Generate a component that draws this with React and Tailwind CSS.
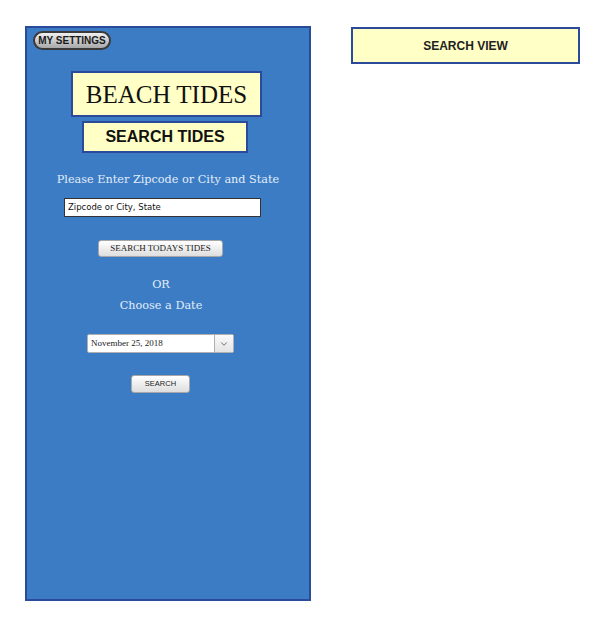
import React from 'react';
import { ChevronDown } from 'lucide-react';

const serif = { fontFamily: '"Liberation Serif", "Times New Roman", serif' };
const slab = { fontFamily: '"DejaVu Serif", "Liberation Serif", serif' };

const App = () => {
  return (
    <div className="w-[594px] h-[617px] bg-white flex items-start" style={{ fontFamily: '"Liberation Sans", Arial, sans-serif' }}>
      {/* Phone panel */}
      <div className="ml-[25px] mt-[26px] w-[286px] h-[575px] bg-[#3b7cc4] border-2 border-[#2b4a99] flex flex-col items-start">
        <button className="ml-[6px] mt-[3px] w-[78px] h-[19px] rounded-full border-2 border-[#3a3a3a] bg-gradient-to-b from-[#f0f0f0] to-[#a8a8a8] text-[10px] font-bold text-[#1a1a1a] leading-none flex items-center justify-center">
          MY SETTINGS
        </button>

        <div className="ml-[44px] mt-[21px] w-[191px] h-[46px] bg-[#ffffc6] border-2 border-[#2b4a99] flex items-center justify-center">
          <span className="text-[25px] text-[#111] leading-none" style={serif}>BEACH TIDES</span>
        </div>

        <div className="ml-[55px] mt-[4px] w-[166px] h-[32px] bg-[#ffffc6] border-2 border-[#2b4a99] flex items-center justify-center">
          <span className="text-[16px] font-bold text-[#111] leading-none">SEARCH TIDES</span>
        </div>

        <p className="w-full mt-[19px] text-center text-[11.25px] leading-[16px] text-[#e3edfb]" style={slab}>
          Please Enter Zipcode or City and State
        </p>

        <div className="ml-[37px] mt-[10px] w-[197px] h-[19px] bg-white border border-[#333] flex items-center px-[3px]">
          <span className="text-[8.5px] text-[#111]" style={{ fontFamily: '"DejaVu Sans", sans-serif' }}>Zipcode or City, State</span>
        </div>

        <button className="ml-[71px] mt-[23px] w-[125px] h-[17px] rounded-[3px] border border-[#a8a8a8] bg-gradient-to-b from-[#ffffff] to-[#dedede] text-[9px] text-[#222] leading-none flex items-center justify-center" style={serif}>
          SEARCH TODAYS TIDES
        </button>

        <p className="w-[268px] mt-[20px] text-center text-[11.25px] leading-[16px] text-[#e3edfb]" style={slab}>OR</p>
        <p className="w-[268px] mt-[5px] text-center text-[11.25px] leading-[16px] text-[#e3edfb]" style={slab}>Choose a Date</p>

        <div className="ml-[60px] mt-[20px] w-[147px] h-[19px] bg-white border border-[#b0b0b0] rounded-[2px] flex items-stretch">
          <span className="flex-1 flex items-center pl-[3px] text-[9px] text-[#222]" style={serif}>November 25, 2018</span>
          <span className="w-[19px] border-l border-[#b0b0b0] bg-gradient-to-b from-[#fafafa] to-[#e4e4e4] flex items-center justify-center">
            <ChevronDown size={10} strokeWidth={2} className="text-[#555]" />
          </span>
        </div>

        <button className="ml-[104px] mt-[22px] w-[59px] h-[18px] rounded-[3px] border border-[#a8a8a8] bg-gradient-to-b from-[#ffffff] to-[#dedede] text-[7.5px] text-[#222] leading-none flex items-center justify-center">
          SEARCH
        </button>
      </div>

      {/* Label */}
      <div className="ml-[40px] mt-[27px] w-[229px] h-[37px] bg-[#ffffc6] border-2 border-[#2b4a99] flex items-center justify-center">
        <span className="text-[12px] font-bold text-[#222]">SEARCH VIEW</span>
      </div>
    </div>
  );
};

export default App;
